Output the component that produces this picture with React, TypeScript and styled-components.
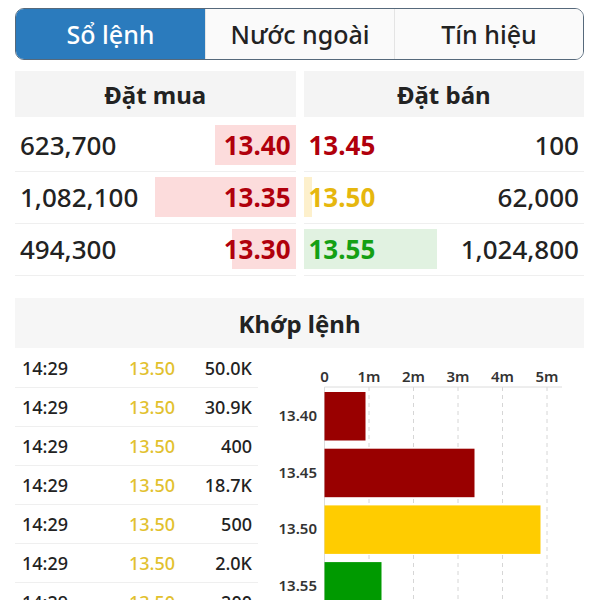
import React from "react";
import styled, { createGlobalStyle } from "styled-components";

const Global = createGlobalStyle`
  html, body { margin: 0; padding: 0; background: #fff; }
  body { font-family: "Noto Sans", "Liberation Sans", sans-serif; color: #222; }
`;

const Page = styled.div`
  width: 600px;
  height: 600px;
  overflow: hidden;
  box-sizing: border-box;
  padding: 8px 16px 0 15px;
  display: flex;
  flex-direction: column;
  & > * { flex-shrink: 0; }
`;

const TabBar = styled.div`
  display: grid;
  grid-template-columns: repeat(3, 1fr);
  height: 52px;
  box-sizing: border-box;
  border: 1.5px solid #56697b;
  border-radius: 9px;
  overflow: hidden;
  background: #fafafa;
`;

const Tab = styled.div<{ $active?: boolean }>`
  display: flex;
  align-items: center;
  justify-content: center;
  font-size: 25px;
  font-weight: 500;
  background: ${(p) => (p.$active ? "#2b7bbd" : "#fafafa")};
  color: ${(p) => (p.$active ? "#fff" : "#222")};
  & + & { border-left: 1px solid #e4e4e4; }
`;

const OrderBook = styled.div`
  display: grid;
  grid-template-columns: 1fr 1fr;
  column-gap: 8px;
  margin-top: 11px;
`;

const Side = styled.div`
  display: flex;
  flex-direction: column;
`;

const SectionHeader = styled.div<{ $h: number }>`
  height: ${(p) => p.$h}px;
  flex-shrink: 0;
  background: #f4f4f4;
  display: flex;
  align-items: center;
  justify-content: center;
  font-weight: 700;
  font-size: 24px;
  color: #222;
`;

const Rows = styled.div`
  margin-top: 3px;
  display: flex;
  flex-direction: column;
`;

const OrderRow = styled.div`
  height: 52px;
  box-sizing: border-box;
  padding: 5px 0 6px;
  border-bottom: 1px solid #efefef;
`;

const RowInner = styled.div`
  position: relative;
  height: 40px;
  display: flex;
  align-items: center;
  justify-content: space-between;
  padding: 0 5px;
`;

const DepthBar = styled.div<{ $side: "bid" | "ask"; $bg: string }>`
  position: absolute;
  top: 0;
  bottom: 0;
  ${(p) => (p.$side === "bid" ? "right: 0;" : "left: 0;")}
  background: ${(p) => p.$bg};
`;

const Volume = styled.span`
  position: relative;
  font-size: 26px;
  font-weight: 500;
  color: #222;
`;

const Price = styled.span<{ $color: string }>`
  position: relative;
  font-size: 26px;
  font-weight: 700;
  color: ${(p) => p.$color};
`;

const MatchSection = styled.div`
  margin-top: 22px;
  display: flex;
  flex-direction: column;
`;

const MatchHeader = styled(SectionHeader)`
  background: #f6f6f6;
`;

const MatchBody = styled.div`
  display: grid;
  grid-template-columns: 243px 1fr;
  column-gap: 7px;
  margin-top: 1px;
`;

const TradeList = styled.div`
  display: flex;
  flex-direction: column;
`;

const TradeRow = styled.div`
  height: 39px;
  flex-shrink: 0;
  box-sizing: border-box;
  border-bottom: 1px solid #efefef;
  display: grid;
  grid-template-columns: 107px auto 1fr;
  align-items: center;
  padding: 0 6px 0 7px;
  font-size: 18px;
  font-weight: 500;
`;

const TradeTime = styled.span`
  color: #222;
`;

const TradePrice = styled.span`
  color: #e2c12e;
`;

const TradeVol = styled.span`
  color: #222;
  text-align: right;
`;

const ChartBox = styled.div`
  height: 260px;
`;

const RED = "#b0000c";
const YELLOW = "#e6b70e";
const GREEN = "#14a014";

const bids = [
  { vol: "623,700", price: "13.40", w: 81 },
  { vol: "1,082,100", price: "13.35", w: 141 },
  { vol: "494,300", price: "13.30", w: 64 },
];

const asks = [
  { price: "13.45", vol: "100", color: RED, bg: "#fcdcdc", w: 0 },
  { price: "13.50", vol: "62,000", color: YELLOW, bg: "#fdf0cc", w: 8 },
  { price: "13.55", vol: "1,024,800", color: GREEN, bg: "#e1f2e1", w: 133 },
];

const trades = ["50.0K", "30.9K", "400", "18.7K", "500", "2.0K", "200"];

const ticks = ["0", "1m", "2m", "3m", "4m", "5m"];
const bars = [
  { label: "13.40", w: 41, color: "#990000" },
  { label: "13.45", w: 150, color: "#990000" },
  { label: "13.50", w: 216, color: "#ffcc00" },
  { label: "13.55", w: 57, color: "#009a00" },
];

function Chart() {
  const x0 = 59.5;
  const step = 44.5;
  const axisY = 38;
  return (
    <svg width="319" height="260" viewBox="0 0 319 260">
      {ticks.map((t, i) => (
        <g key={t}>
          {i > 0 && (
            <line
              x1={x0 + i * step}
              x2={x0 + i * step}
              y1={axisY}
              y2={260}
              stroke="#d6d6d6"
              strokeWidth="1"
              strokeDasharray="4 4"
            />
          )}
          <text
            x={x0 + i * step}
            y={29}
            textAnchor="middle"
            dominantBaseline="middle"
            fontFamily="Noto Sans, Liberation Sans, sans-serif"
            fontSize="15"
            fontWeight="600"
            fill="#333"
          >
            {t}
          </text>
        </g>
      ))}
      <line x1={x0} x2={297} y1={axisY} y2={axisY} stroke="#dcdcdc" strokeWidth="1" />
      <line x1={x0} x2={x0} y1={axisY} y2={260} stroke="#dcdcdc" strokeWidth="1" />
      {bars.map((b, i) => {
        const top = 43 + i * 56.7;
        return (
          <g key={b.label}>
            <rect x={x0} y={top} width={b.w} height={48.5} fill={b.color} />
            <text
              x={52}
              y={top + 25}
              textAnchor="end"
              dominantBaseline="middle"
              fontFamily="Noto Sans, Liberation Sans, sans-serif"
              fontSize="15"
              fontWeight="600"
              fill="#333"
            >
              {b.label}
            </text>
          </g>
        );
      })}
    </svg>
  );
}

export default function App() {
  return (
    <>
      <Global />
      <Page>
        <TabBar>
          <Tab $active>Sổ lệnh</Tab>
          <Tab>Nước ngoài</Tab>
          <Tab>Tín hiệu</Tab>
        </TabBar>

        <OrderBook>
          <Side>
            <SectionHeader $h={46}>Đặt mua</SectionHeader>
            <Rows>
              {bids.map((b) => (
                <OrderRow key={b.price}>
                  <RowInner>
                    <DepthBar $side="bid" $bg="#fcdcdc" style={{ width: b.w }} />
                    <Volume>{b.vol}</Volume>
                    <Price $color={RED}>{b.price}</Price>
                  </RowInner>
                </OrderRow>
              ))}
            </Rows>
          </Side>
          <Side>
            <SectionHeader $h={46}>Đặt bán</SectionHeader>
            <Rows>
              {asks.map((a) => (
                <OrderRow key={a.price}>
                  <RowInner>
                    <DepthBar $side="ask" $bg={a.bg} style={{ width: a.w }} />
                    <Price $color={a.color}>{a.price}</Price>
                    <Volume>{a.vol}</Volume>
                  </RowInner>
                </OrderRow>
              ))}
            </Rows>
          </Side>
        </OrderBook>

        <MatchSection>
          <MatchHeader $h={50}>Khớp lệnh</MatchHeader>
          <MatchBody>
            <TradeList>
              {trades.map((v, i) => (
                <TradeRow key={i}>
                  <TradeTime>14:29</TradeTime>
                  <TradePrice>13.50</TradePrice>
                  <TradeVol>{v}</TradeVol>
                </TradeRow>
              ))}
            </TradeList>
            <ChartBox>
              <Chart />
            </ChartBox>
          </MatchBody>
        </MatchSection>
      </Page>
    </>
  );
}
